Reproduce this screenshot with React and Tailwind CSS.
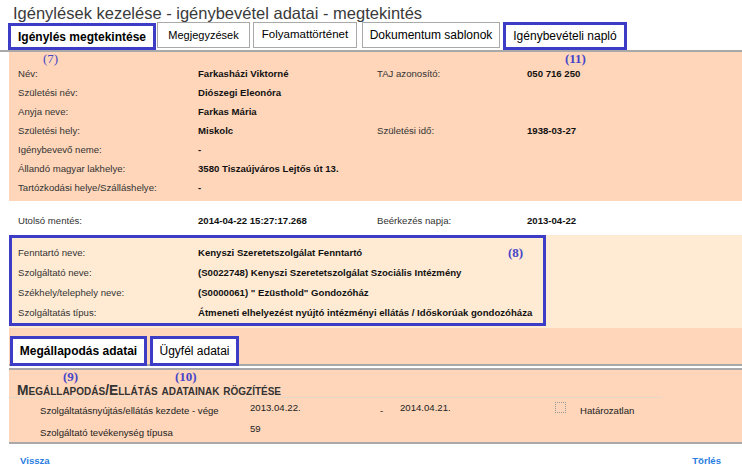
export default function App() {
  const topRows = [
    ["Név:", "Farkasházi Viktorné", "TAJ azonosító:", "050 716 250"],
    ["Születési név:", "Diószegi Eleonóra", "", ""],
    ["Anyja neve:", "Farkas Mária", "", ""],
    ["Születési hely:", "Miskolc", "Születési idő:", "1938-03-27"],
    ["Igénybevevő neme:", "-", "", ""],
    ["Állandó magyar lakhelye:", "3580 Tiszaújváros Lejtős út 13.", "", ""],
    ["Tartózkodási helye/Szálláshelye:", "-", "", ""],
  ];
  const boxRows = [
    ["Fenntartó neve:", "Kenyszi Szeretetszolgálat Fenntartó"],
    ["Szolgáltató neve:", "(S0022748) Kenyszi Szeretetszolgálat Szociális Intézmény"],
    ["Székhely/telephely neve:", "(S0000061) \" Ezüsthold\" Gondozóház"],
    ["Szolgáltatás típus:", "Átmeneti elhelyezést nyújtó intézményi ellátás / Időskorúak gondozóháza"],
  ];
  return (
    <div className="w-[742px] h-[471px] bg-white overflow-hidden font-['Liberation_Sans',Arial,sans-serif] text-[#222]">
      <h1 className="h-[22px] pl-[13px] pt-[3px] text-[16.5px] leading-[20px] font-normal text-[#3a3a3a] whitespace-nowrap">
        Igénylések kezelése - igénybevétel adatai - megtekintés
      </h1>

      {/* main tabs */}
      <div className="flex items-start h-[30px] border-b-2 border-[#a9a9a9]">
        <div className="ml-[8px] mt-[1px] w-[148px] h-[27px] border-[3px] border-[#3c3cc6] bg-white flex items-center justify-center text-[12px] font-bold text-black whitespace-nowrap">
          Igénylés megtekintése
        </div>
        <div className="ml-[1px] w-[93px] h-[26px] border border-[#a9a9a9] bg-white flex items-center justify-center text-[11px] text-black whitespace-nowrap">
          Megjegyzések
        </div>
        <div className="ml-[3px] w-[104px] h-[26px] border border-[#a9a9a9] bg-white flex items-center justify-center text-[11.5px] text-black whitespace-nowrap">
          Folyamattörténet
        </div>
        <div className="ml-[5px] w-[138px] h-[26px] border border-[#a9a9a9] bg-white flex items-center justify-center text-[12px] text-black whitespace-nowrap">
          Dokumentum sablonok
        </div>
        <div className="ml-[3px] w-[124px] h-[28px] border-[3px] border-[#3c3cc6] bg-white flex items-center justify-center text-[12px] text-black whitespace-nowrap">
          Igénybevételi napló
        </div>
      </div>

      {/* personal data */}
      <div className="relative ml-[9px] bg-[#ffd6ba] pt-[12px] pb-[4px] pl-[9px]">
        <span className="absolute left-[34px] top-[0px] font-['Liberation_Serif',serif] text-[13px] leading-[14px] text-[#4646c8]">(7)</span>
        <span className="absolute left-[556px] top-[0px] font-['Liberation_Serif',serif] text-[13px] leading-[14px] font-bold text-[#4646c8]">(11)</span>
        {topRows.map((r, i) => (
          <div key={i} className="grid grid-cols-[180px_179px_150px_1fr] h-[19px] items-center text-[9.6px] leading-[12px] whitespace-nowrap">
            <span className="text-[#333]">{r[0]}</span>
            <span className="font-bold text-[#111]">{r[1]}</span>
            <span className="text-[#333]">{r[2]}</span>
            <span className="font-bold text-[#111]">{r[3]}</span>
          </div>
        ))}
      </div>

      {/* last save */}
      <div className="ml-[9px] pl-[9px] pt-[10px] pb-[5px]">
        <div className="grid grid-cols-[180px_179px_150px_1fr] h-[19px] items-center text-[9.6px] leading-[12px] whitespace-nowrap">
          <span className="text-[#333]">Utolsó mentés:</span>
          <span className="font-bold text-[#111]">2014-04-22 15:27:17.268</span>
          <span className="text-[#333]">Beérkezés napja:</span>
          <span className="font-bold text-[#111]">2013-04-22</span>
        </div>
      </div>

      {/* provider box */}
      <div className="ml-[9px] h-[93px] bg-[#ffead3] flex items-start">
        <div className="relative w-[537px] h-[91px] border-[3px] border-[#3c3cc6] pl-[6px] pt-[5px]">
          <span className="absolute left-[496px] top-[8px] font-['Liberation_Serif',serif] text-[13px] leading-[14px] font-bold text-[#4646c8]">(8)</span>
          {boxRows.map((r, i) => (
            <div key={i} className="grid grid-cols-[180px_1fr] h-[20px] items-center text-[9.6px] leading-[12px] whitespace-nowrap">
              <span className="text-[#333]">{r[0]}</span>
              <span className="font-bold text-[#111]">{r[1]}</span>
            </div>
          ))}
        </div>
      </div>

      {/* sub tabs */}
      <div className="ml-[9px] h-[38px] pt-[8px] bg-[#ffd6ba] border-b-2 border-[#a9a9a9] flex items-start">
        <div className="relative z-10 ml-[1px] w-[137px] h-[30px] border-[3px] border-[#3c3cc6] bg-white flex items-center justify-center text-[12px] font-bold text-black whitespace-nowrap">
          Megállapodás adatai
        </div>
        <div className="relative z-10 ml-[3px] w-[89px] h-[30px] border-[3px] border-[#3c3cc6] bg-white flex items-center justify-center text-[12px] text-black whitespace-nowrap">
          Ügyfél adatai
        </div>
      </div>

      {/* agreement panel */}
      <div className="relative ml-[9px] mt-[2px] bg-[#ffd6ba] border-t-2 border-b-2 border-[#a9a9a9]">
        <span className="absolute left-[54px] top-[0px] font-['Liberation_Serif',serif] text-[13px] leading-[13px] font-bold text-[#4646c8]">(9)</span>
        <span className="absolute left-[166px] top-[0px] font-['Liberation_Serif',serif] text-[13px] leading-[13px] font-bold text-[#4646c8]">(10)</span>
        <div className="w-[653px] pt-[15px] pl-[8px] border-b border-[#e6d8c6] text-[13.8px] leading-[12px] font-bold text-[#333] [font-variant:small-caps] whitespace-nowrap">
          Megállapodás/Ellátás adatainak rögzítése
        </div>
        <div className="flex h-[22px] text-[9.6px] leading-[12px] text-[#222] whitespace-nowrap">
          <span className="ml-[31px] w-[210px] pt-[7px]">Szolgáltatásnyújtás/ellátás kezdete - vége</span>
          <span className="w-[130px] pt-[4px]">2013.04.22.</span>
          <span className="w-[20px] pt-[7px]">-</span>
          <span className="w-[155px] pt-[4px]">2014.04.21.</span>
          <span className="mt-[4px] w-[11px] h-[11px] border border-dotted border-[#9a9a9a]"></span>
          <span className="ml-[14px] pt-[7px]">Határozatlan</span>
        </div>
        <div className="flex h-[22px] text-[9.6px] leading-[12px] text-[#222] whitespace-nowrap">
          <span className="ml-[31px] w-[210px] pt-[7px]">Szolgáltató tevékenység típusa</span>
          <span className="pt-[3px]">59</span>
        </div>
      </div>

      {/* footer */}
      <div className="flex justify-between pl-[20px] pr-[21px] mt-[11px] text-[9.6px] leading-[12px] font-bold text-[#2a7de1]">
        <span>Vissza</span>
        <span>Törlés</span>
      </div>
    </div>
  );
}
